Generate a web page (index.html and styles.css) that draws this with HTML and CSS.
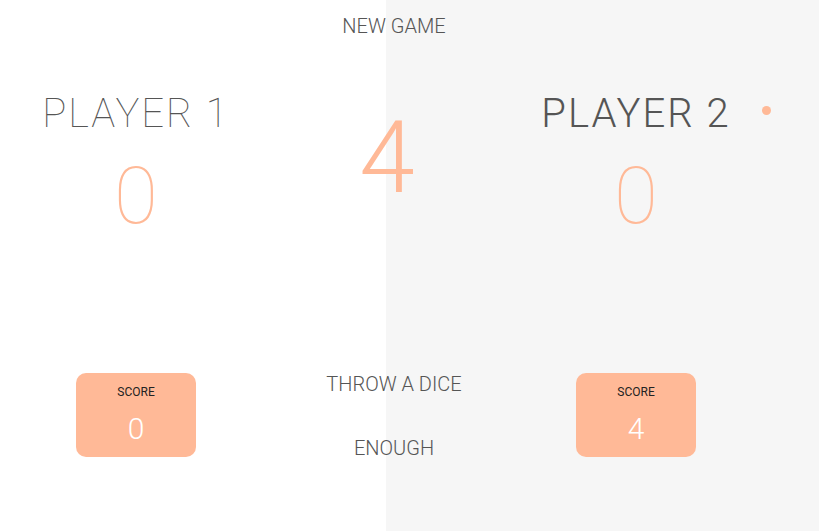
FILE: index.html
```html
<!DOCTYPE html>
<html lang="en">
<head>
<meta charset="utf-8">
<title>Pig Game</title>
<link rel="stylesheet" href="styles.css">
</head>
<body>
<div class="game">
  <section class="panel panel-left">
    <div class="player">
      <h2 class="name">Player 1</h2>
      <div class="total">0</div>
      <div class="current">
        <div class="current-label">Score</div>
        <div class="current-value">0</div>
      </div>
    </div>
  </section>
  <section class="panel panel-right">
    <div class="player">
      <h2 class="name active">Player 2</h2>
      <span class="active-dot"></span>
      <div class="total">0</div>
      <div class="current">
        <div class="current-label">Score</div>
        <div class="current-value">4</div>
      </div>
    </div>
  </section>
  <div class="dice">4</div>
  <div class="controls">
    <button class="btn btn-new">New game</button>
    <button class="btn btn-roll">Throw a dice</button>
    <button class="btn btn-hold">Enough</button>
  </div>
</div>
</body>
</html>
```
FILE: styles.css
```css
* { box-sizing: border-box; }
html, body { margin: 0; padding: 0; }
body {
  font-family: Roboto, "Liberation Sans", sans-serif;
  color: #555;
  background: #fff;
}
.game {
  position: relative;
  display: flex;
  height: 531px;
  width: 819px;
  overflow: hidden;
}
.panel { height: 100%; }
.panel-left { width: 386px; background: #fff; }
.panel-right { flex: 1; background: #f6f6f6; padding-left: 114px; }
.player {
  position: relative;
  width: 272px;
  display: flex;
  flex-direction: column;
  align-items: center;
  padding-top: 94px;
}
.name {
  margin: 0;
  font-size: 40px;
  line-height: 40px;
  font-weight: 100;
  letter-spacing: 2px;
  text-transform: uppercase;
  color: #555;
}
.name.active { font-weight: 300; }
.active-dot {
  position: absolute;
  left: 262px;
  top: 106px;
  width: 9px;
  height: 9px;
  border-radius: 50%;
  background: #ffb997;
}
.total {
  margin-top: 22px;
  font-size: 80px;
  line-height: 80px;
  font-weight: 100;
  color: #ffb997;
}
.current {
  margin-top: 137px;
  width: 120px;
  height: 84px;
  border-radius: 10px;
  background: #ffb997;
  display: flex;
  flex-direction: column;
  align-items: center;
  padding-top: 12.5px;
}
.current-label {
  font-size: 12px;
  line-height: 12px;
  text-transform: uppercase;
  color: #222;
}
.current-value {
  margin-top: 16px;
  font-size: 30px;
  line-height: 30px;
  font-weight: 300;
  color: #fff;
}
.dice {
  position: absolute;
  left: 337px;
  top: 108px;
  width: 100px;
  text-align: center;
  font-size: 100px;
  line-height: 100px;
  font-weight: 300;
  color: #ffb997;
}
.controls {
  position: absolute;
  left: 294px;
  top: 0;
  width: 200px;
  height: 100%;
}
.btn {
  position: absolute;
  left: 0;
  width: 200px;
  padding: 0;
  border: none;
  background: none;
  font-family: Roboto, "Liberation Sans", sans-serif;
  font-size: 20px;
  line-height: 20px;
  font-weight: 300;
  text-transform: uppercase;
  color: #555;
  text-align: center;
  cursor: pointer;
}
.btn-new { top: 16px; }
.btn-roll { top: 374px; }
.btn-hold { top: 438px; }
```
